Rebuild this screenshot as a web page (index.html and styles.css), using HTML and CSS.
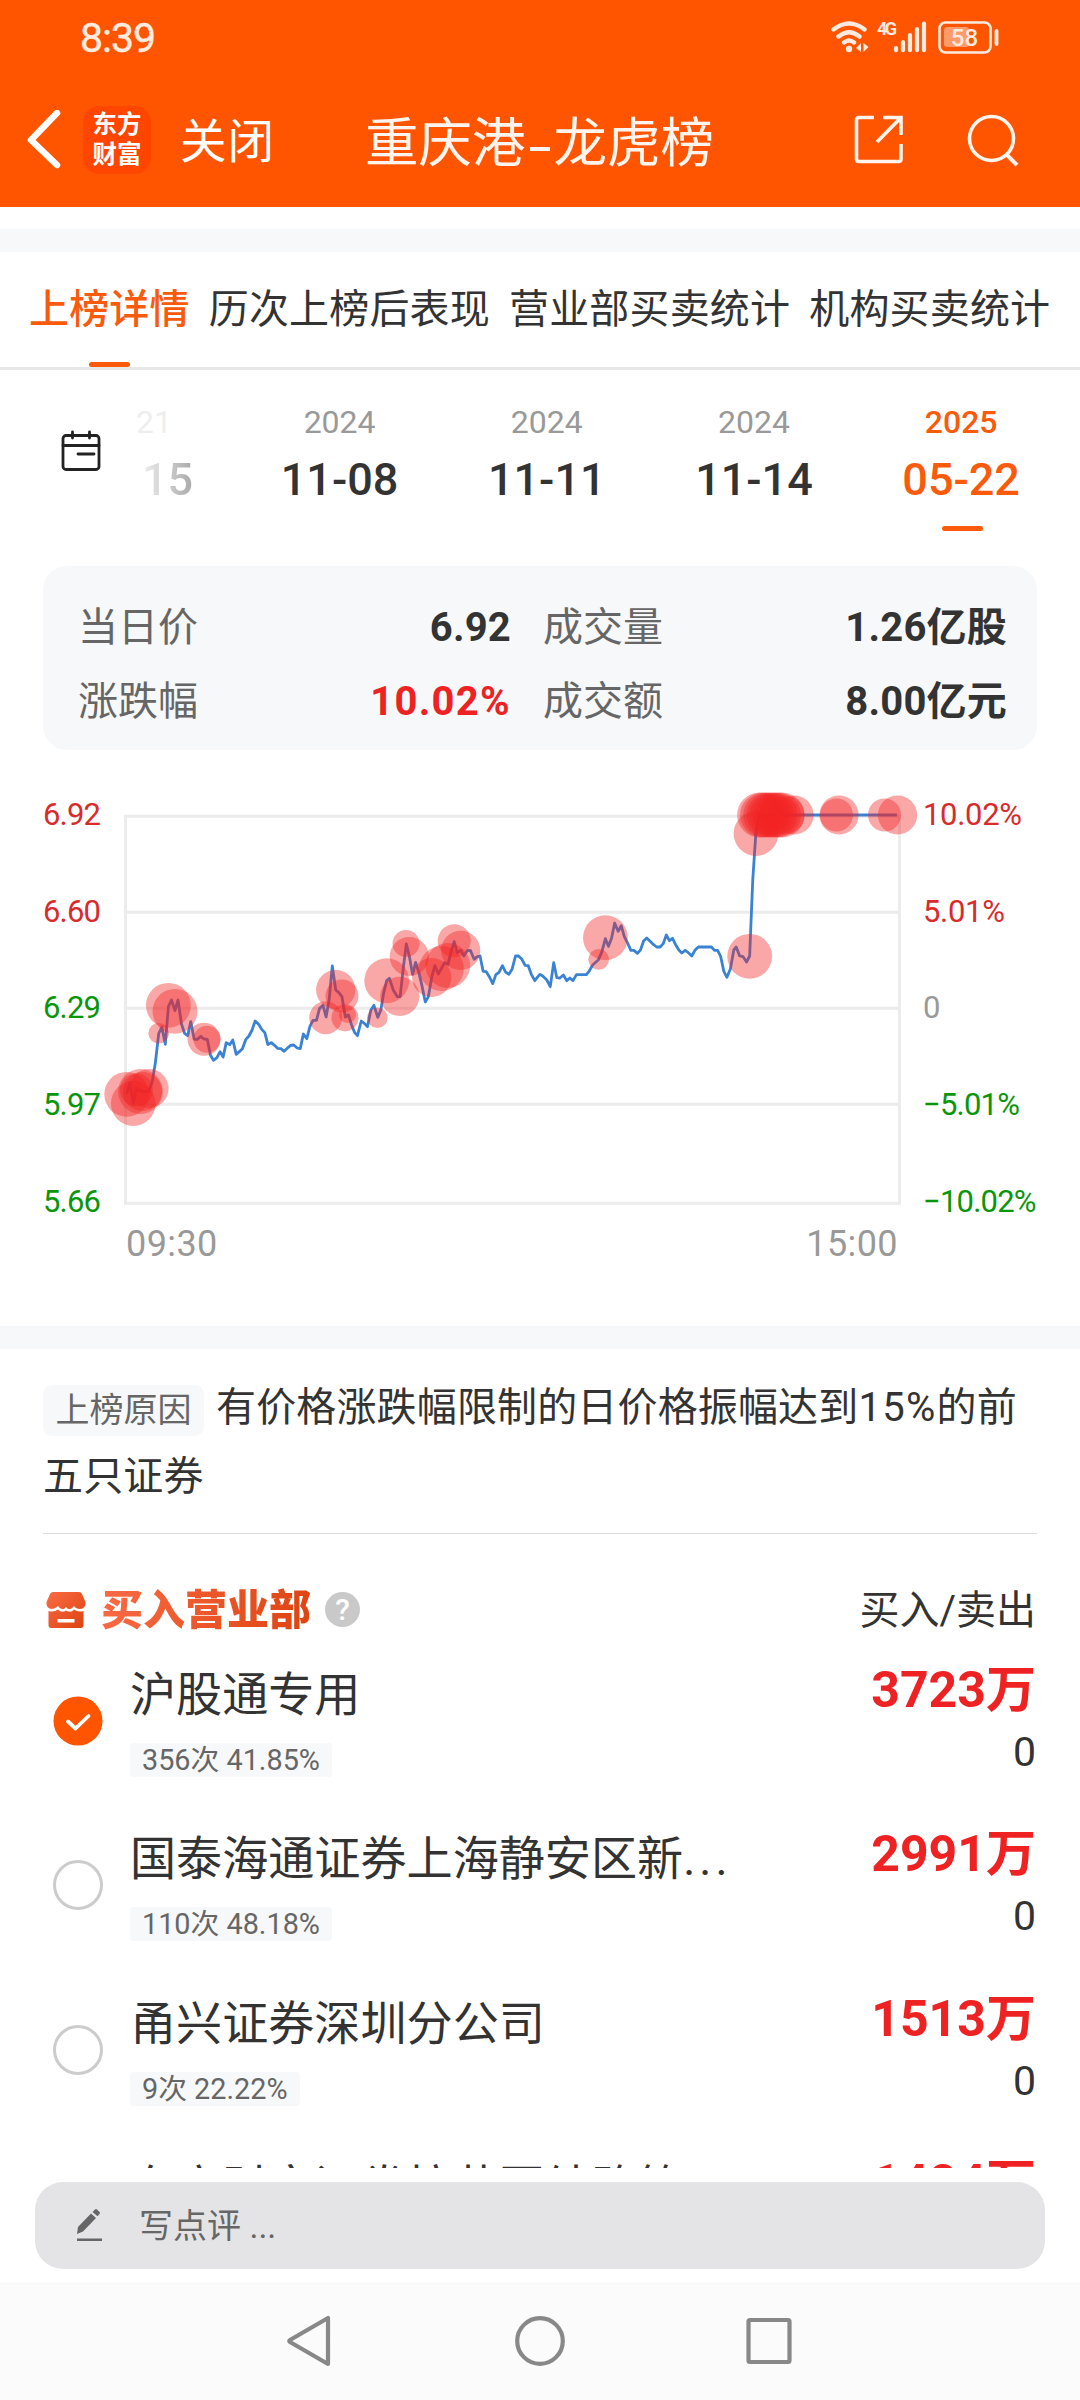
FILE: index.html
```html
<!DOCTYPE html>
<html lang="zh-CN">
<head>
<meta charset="utf-8">
<title>重庆港-龙虎榜</title>
<link rel="stylesheet" href="styles.css">
</head>
<body>
<header class="header">
  <div class="status">
    <span class="clock">8:39</span>
    <svg class="status-icons" width="172" height="44" viewBox="0 0 172 44" fill="none" stroke="#ffeadf" stroke-linecap="round">
      <g stroke-width="4.4">
        <path d="M3.500 13.500Q19 1.500 34.500 13.500M8.500 20.500Q19 12 29.500 20.500M14 26.500Q19 22.500 24 26.500"/>
      </g>
      <circle cx="19" cy="33" r="3.200" fill="#ffeadf" stroke="none"/>
      <path d="M31 27v9l-5-4zM33.500 27l5 4-5 5z" fill="#ffeadf" stroke="none"/>
      <text class="net" x="47" y="19">4G</text>
      <path stroke-width="4.200" d="M66 32v2.200M73 26v8.200M80 19v15.200M87 13v21.200M94 7.500v26.700"/>
      <rect x="109.500" y="6.500" width="51" height="30" rx="6" stroke-width="2.600"/>
      <rect x="114" y="11" width="25" height="20" rx="3" fill="#ff9a6b" stroke="none"/>
      <text class="batt" x="134.500" y="30" text-anchor="middle">58</text>
      <path stroke-width="3.800" d="M166.500 15v13"/>
    </svg>
  </div>
  <div class="nav">
    <svg class="back" width="36" height="60" viewBox="0 0 36 60" fill="none" stroke="#fff" stroke-width="6.500" stroke-linecap="round" stroke-linejoin="round"><path d="M31 6L5 33l26 25" transform="translate(1 -3)"/></svg>
    <div class="logo"><span>东方</span><span>财富</span></div>
    <span class="close">关闭</span>
    <h1 class="title">重庆港<i class="dash"></i>龙虎榜</h1>
    <svg class="share" width="50" height="50" viewBox="0 0 50 50" fill="none" stroke="#fff4ee" stroke-width="3.600"><path d="M20 2.500H5Q2.500 2.500 2.500 5V44Q2.500 46.500 5 46.500H44.500Q47 46.500 47 44V29M29 2.500H47V20M46 3.500L23 27"/></svg>
    <svg class="search" width="52" height="54" viewBox="0 0 52 54" fill="none" stroke="#fff4ee" stroke-width="3.600"><circle cx="24.500" cy="25.500" r="22"/><path d="M38.500 40.500L50 52" stroke-width="4"/></svg>
  </div>
</header>
<div class="band band-top"></div>
<nav class="tabs">
  <span class="tab active">上榜详情</span><span class="tab">历次上榜后表现</span><span class="tab">营业部买卖统计</span><span class="tab">机构买卖统计</span>
</nav>
<section class="dates">
  <svg class="calendar" width="42" height="44" viewBox="0 0 42 44" fill="none" stroke="#222" stroke-width="2.800" stroke-linecap="round"><rect x="3" y="6.500" width="36" height="34" rx="3"/><path d="M3 16.500H39M12.500 3v6M29.500 3v6M18 25H34"/></svg>
  <div class="date past"><span class="year">21</span><span class="day">15</span></div>
  <div class="date"><span class="year">2024</span><span class="day">11-08</span></div>
  <div class="date"><span class="year">2024</span><span class="day">11-11</span></div>
  <div class="date"><span class="year">2024</span><span class="day">11-14</span></div>
  <div class="date current"><span class="year">2025</span><span class="day">05-22</span></div>
</section>
<section class="stats">
  <span class="label">当日价</span><b class="value">6.92</b><span class="label second">成交量</span><b class="value">1.26亿股</b>
  <span class="label">涨跌幅</span><b class="value up">10.02%</b><span class="label second">成交额</span><b class="value">8.00亿元</b>
</section>
<svg class="chart" width="1080" height="576" viewBox="0 750 1080 576">
  <path class="grid" d="M125.500 815V1203.300H899.500V815M125.500 816.300H899.500M125.500 912.300H899.500M125.500 1008.300H899.500M125.500 1104.300H899.500"/>
  <g class="axis">
    <g class="pos"><text x="43" y="825">6.92</text><text x="43" y="922">6.60</text><text class="pct" x="923" y="825">10.02%</text><text class="pct" x="923" y="922">5.01%</text></g>
    <g class="neg"><text x="43" y="1018">6.29</text><text x="43" y="1115">5.97</text><text x="43" y="1212">5.66</text><text class="pct minus" x="923" y="1115">−5.01%</text><text class="pct minus" x="923" y="1212">−10.02%</text></g>
    <text class="mid" x="923" y="1018">0</text>
    <text class="time" x="126" y="1256">09:30</text><text class="time" x="898" y="1256" text-anchor="end">15:00</text>
  </g>
  <g transform="translate(0 770) scale(.34435 .33333)">
    <polyline class="price" points="368,972 377,938 387,1000 396,955 405,962 414,965 432,965 442,935 451,880 461,790 470,772 480,823 489,710 498,690 508,722 517,690 527,762 536,790 545,797 554,755 564,808 573,808 583,799 592,807 602,808 611,855 620,871 630,863 639,845 648,861 657,818 667,824 676,810 686,853 695,845 704,836 714,808 723,798 732,780 741,753 751,763 760,778 769,788 778,824 788,818 797,826 806,835 816,836 825,844 835,834 844,826 853,825 863,834 872,836 881,792 891,806 900,769 909,751 919,751 928,715 938,706 947,741 956,688 965,588 975,660 984,668 993,680 1003,741 1012,735 1021,765 1030,788 1038,797 1049,753 1058,760 1067,770 1077,720 1086,706 1097,742 1106,720 1114,670 1123,632 1131,625 1142,660 1154,680 1162,680 1171,595 1180,522 1189,560 1198,613 1207,577 1217,610 1226,650 1235,696 1244,680 1254,620 1263,587 1273,612 1282,595 1291,578 1301,583 1310,545 1319,515 1328,548 1338,541 1347,558 1357,542 1366,541 1377,568 1386,560 1394,558 1403,604 1412,605 1422,622 1431,641 1440,614 1449,607 1459,587 1468,606 1478,613 1487,598 1497,558 1506,558 1515,567 1525,586 1534,587 1543,613 1553,632 1562,620 1568,613 1576,618 1588,630 1598,650 1608,578 1617,623 1626,624 1636,615 1646,632 1655,624 1664,632 1674,614 1703,614 1712,602 1721,585 1738,569 1748,545 1758,506 1767,529 1776,505 1785,459 1795,484 1804,467 1813,500 1823,520 1832,541 1841,541 1851,550 1860,540 1869,513 1878,504 1888,514 1898,524 1907,531 1917,531 1926,521 1935,495 1944,512 1953,505 1962,524 1972,541 1980,549 1990,541 2000,549 2009,558 2018,541 2028,531 2066,531 2075,541 2084,541 2093,560 2102,604 2111,622 2121,597 2131,540 2138,531 2148,558 2158,560 2168,576 2177,558 2186,330 2195,190 2204,135 2605,135"/>
  </g>
  <g class="trades">
    <circle cx="126.700" cy="1094.300" r="22.400"/><circle cx="133.300" cy="1103.500" r="22.400"/><circle cx="140.500" cy="1091.500" r="22.400"/><circle cx="136.500" cy="1090" r="16.500"/><circle cx="142.500" cy="1091.500" r="19.600"/><circle cx="149" cy="1088.500" r="19.600"/>
    <circle cx="168.400" cy="1005.300" r="22.400"/><circle cx="175" cy="1011.300" r="22.400"/><circle cx="158.700" cy="1033.300" r="10.300"/><circle cx="204" cy="1039.300" r="16.500"/><circle cx="207" cy="1039.300" r="13.500"/>
    <circle cx="325.700" cy="1017.700" r="16.500"/><circle cx="335.700" cy="989.700" r="19.600"/><circle cx="342" cy="996" r="16.500"/><circle cx="345" cy="1017.700" r="13.500"/><circle cx="347.500" cy="1014.500" r="8.500"/><circle cx="377.400" cy="1017.700" r="10.300"/>
    <circle cx="386.700" cy="980.700" r="22.400"/><circle cx="399.800" cy="996.300" r="19.600"/><circle cx="406" cy="943.500" r="13.500"/><circle cx="409.300" cy="956.500" r="19.600"/><circle cx="431.700" cy="977.500" r="19.600"/><circle cx="441.500" cy="968.500" r="22.400"/><circle cx="447.800" cy="965.500" r="22.400"/><circle cx="454.200" cy="940.700" r="16.500"/><circle cx="460.700" cy="950.300" r="19.600"/>
    <circle cx="598.700" cy="959.300" r="10.400"/><circle cx="605.400" cy="937.700" r="22.400"/><circle cx="749.700" cy="956.300" r="22.400"/><circle cx="756" cy="833.500" r="22.400"/>
    <circle cx="759.500" cy="815" r="22.400"/><circle cx="762.500" cy="815" r="22.400"/><circle cx="765.700" cy="815" r="22.400"/><circle cx="768.900" cy="815" r="22.400"/><circle cx="772" cy="815" r="22.400"/><circle cx="775.300" cy="815" r="22.400"/><circle cx="778.500" cy="815" r="22.400"/><circle cx="782" cy="815" r="22.400"/><circle cx="785" cy="815" r="19.600"/><circle cx="794" cy="815" r="19.600"/>
    <circle cx="836.500" cy="815" r="16.500"/><circle cx="839" cy="815" r="19.600"/><circle cx="884.500" cy="815" r="16.500"/><circle cx="897.500" cy="815" r="19.600"/>
  </g>
</svg>
<div class="band"></div>
<section class="reason"><span class="reason-tag">上榜原因</span>有价格涨跌幅限制的日价格振幅达到<span class="num">15%</span>的前五只证券</section>
<section class="board">
  <div class="board-head">
    <svg width="40" height="36" viewBox="0 0 40 36"><defs><linearGradient id="shop" x1="0" y1="0" x2="1" y2="1"><stop offset="0" stop-color="#fa6b45"/><stop offset="1" stop-color="#dd4310"/></linearGradient></defs><path fill="url(#shop)" d="M7 0H33Q35 0 36 2L39.500 10Q40 17 34 17Q30 17 28 14Q24 20 20 15Q16 20 12 14Q9 17 6 17Q0 17 .500 10L4 2Q5 0 7 0ZM2.500 19Q8 20.500 12 17.500Q16 21.500 20 18.500Q25 21.500 28 17.500Q32 20.500 37.500 19V33Q37.500 36 34.500 36H5.500Q2.500 36 2.500 33Z"/><rect x="11.500" y="27" width="17" height="3.500" fill="#fff"/></svg>
    <h2>买入营业部</h2>
    <span class="help">?</span>
    <span class="cols">买入/卖出</span>
  </div>
  <div class="row"><svg class="radio" width="50" height="50" viewBox="0 0 50 50"><circle cx="25" cy="25" r="24.500" fill="#ff5500"/><path d="M15 25.500l7.500 7L35.500 20" fill="none" stroke="#fff" stroke-width="3.800" stroke-linecap="round" stroke-linejoin="round"/></svg><div class="info"><span class="name">沪股通专用</span><span class="record">356次 41.85%</span></div><div class="sums"><b>3723万</b><span>0</span></div></div>
  <div class="row"><i class="radio off"></i><div class="info"><span class="name">国泰海通证券上海静安区新<span class="more">...</span></span><span class="record">110次 48.18%</span></div><div class="sums"><b>2991万</b><span>0</span></div></div>
  <div class="row"><i class="radio off"></i><div class="info"><span class="name">甬兴证券深圳分公司</span><span class="record">9次 22.22%</span></div><div class="sums"><b>1513万</b><span>0</span></div></div>
  <div class="row"><div class="info"><span class="name">东方财富证券拉萨团结路第</span></div><div class="sums"><b>1484万</b></div></div>
</section>
<footer class="comment">
  <div class="comment-box">
    <svg width="30" height="34" viewBox="0 0 30 34" fill="#666"><path d="M2 25l1-7L16 4.500l5 4.500L8 22.500zM17.500 3L20 .500q1-.8 2 0L24.500 3q.8 1 0 2L22.500 7.300zM2 29.500H27v2.600H2z"/></svg>
    <span>写点评 ...</span>
  </div>
</footer>
<div class="sysbar">
  <svg width="1080" height="118" viewBox="0 0 1080 118" fill="none" stroke="#888" stroke-width="4.200" stroke-linejoin="round"><path d="M328 36V82L290 60Q288.500 59 290 58Z"/><circle cx="540" cy="59" r="22.800"/><rect x="748.500" y="38" width="41" height="42" rx="1.500"/></svg>
</div>
</body>
</html>
```
FILE: styles.css
```css
* { box-sizing: border-box; }
body { margin: 0; width: 1080px; height: 2400px; overflow: hidden; display: flex; flex-direction: column; background: #fff; color: #333; font-family: Roboto, "Noto Sans CJK SC", sans-serif; }
body > * { flex: none; }
h1, h2 { margin: 0; font-weight: 400; }
svg { display: block; flex: none; }

.header { height: 207px; background: #ff5500; color: #fff4ee; }
.status { height: 76px; padding: 0 78px 0 80px; display: flex; justify-content: space-between; align-items: center; }
.clock { font-size: 41px; line-height: 76px; letter-spacing: -1px; color: #ffeadf; -webkit-text-stroke: .5px #ffeadf; }
.status-icons text { stroke: none; fill: #ffeadf; font-weight: 500; }
.status-icons .net { font: 700 18px "Roboto", sans-serif; letter-spacing: -2.500px; }
.status-icons .batt { font-size: 24px; }
.nav { height: 128px; padding: 0 60px 0 25px; display: flex; align-items: center; }
.logo { width: 68px; height: 68px; margin-left: 22px; border-radius: 16px; background: #ff4600; color: #fff; display: flex; flex-direction: column; align-items: center; justify-content: center; font-weight: 700; font-size: 24.500px; line-height: 30px; }
.close { margin: 3px 0 0 29px; width: 99px; font-size: 46.500px; line-height: 70px; white-space: nowrap; color: #fff; letter-spacing: 1px; }
.title { margin: 7px 0 0 86px; width: 350px; font-size: 53.500px; line-height: 76px; white-space: nowrap; display: flex; align-items: center; }
.dash { width: 20px; height: 4px; margin: 11px 4px 0 4px; background: #fff4ee; }
.share { margin-left: 139px; margin-right: 63px; }

.band { height: 23px; background: #f7f8fa; }
.band-top { margin-top: 22px; }

.tabs { height: 118px; border-bottom: 3px solid #e8e8e8; padding-left: 29px; display: flex; gap: 19.200px; font-size: 40px; line-height: 116px; white-space: nowrap; }
.tab { height: 115px; letter-spacing: .15px; }
.active, .current { position: relative; color: #f95a0b; font-weight: 500; }
.active::after, .current::after { content: ""; position: absolute; left: 60px; bottom: 0; width: 41px; height: 5px; border-radius: 3px; background: #f95a0b; }

.dates { height: 196px; padding-left: 60px; display: flex; }
.calendar { margin-top: 59px; }
.date { width: 207.200px; padding-top: 33px; display: flex; flex-direction: column; align-items: center; }
.year { font-size: 32px; line-height: 38px; color: #999; }
.day { margin-top: 11px; font-size: 45px; line-height: 56px; font-weight: 500; }
.past { width: 98px; margin-left: 34px; margin-right: 2px; align-items: flex-start; }
.past .year { color: #eee; }
.past .day { margin-left: 6px; background: linear-gradient(90deg, #eee, #aaa); background-clip: text; -webkit-background-clip: text; color: transparent; }
.current .year { color: #f95a0b; }
.current::after { left: 84px; bottom: 35px; }

.stats { height: 184px; margin: 0 43px; padding: 25px 30px 0 35px; border-radius: 24px; background: #f7f8fa; display: grid; grid-template-columns: 150px 283px 213px 1fr; grid-auto-rows: 74px; align-items: center; font-size: 40px; line-height: 74px; white-space: nowrap; }
.label { color: #666; }
.second { padding-left: 32px; }
.value { text-align: right; font-weight: 700; letter-spacing: .2px; }
.up { color: #ee2222; letter-spacing: 1.300px; }

.grid { fill: none; stroke: #ececec; stroke-width: 3; }
.price { fill: none; stroke: #3a82d3; stroke-width: 2.800px; vector-effect: non-scaling-stroke; stroke-linejoin: round; }
.trades { fill: #f22222; fill-opacity: .4; }
.axis { font-size: 31px; letter-spacing: -.8px; }
.pct { font-size: 31px; letter-spacing: -.3px; }
.minus { letter-spacing: -.8px; }
.pos { fill: #d92b2b; }
.neg { fill: #0a960a; }
.mid, .time { fill: #999; }
.time { font-size: 36px; letter-spacing: .4px; }

.reason { height: 185px; margin: 0 43px; padding-top: 24px; border-bottom: 1px solid #ddd; font-size: 40px; line-height: 69px; letter-spacing: .15px; }
.reason-tag { display: inline-block; width: 161px; height: 51px; margin-right: 12px; vertical-align: middle; border-radius: 9px; background: #f7f8fa; color: #666; font-size: 34px; line-height: 51px; text-align: center; letter-spacing: 0; }
.num { letter-spacing: 1.300px; }

.board { height: 634px; overflow: hidden; padding: 0 43px; }
.board-head { height: 120px; padding: 31px 0 0 3px; display: flex; align-items: flex-start; }
.board-head svg { margin-top: 27px; }
.board h2 { margin: 8px 0 0 15px; font-size: 42px; line-height: 76px; font-weight: 900; background: linear-gradient(100deg, #fa6b45, #dd4310); background-clip: text; -webkit-background-clip: text; color: transparent; }
.help { width: 35px; height: 35px; margin: 27px 0 0 14px; border-radius: 50%; background: #c9c9c9; color: #fff; font-size: 30px; line-height: 36px; font-weight: 500; text-align: center; }
.cols { margin: 11px 1px 0 auto; font-size: 40px; line-height: 70px; }
.row { height: 164.300px; display: flex; }
.radio { width: 50px; height: 50px; margin: 42px 0 0 10px; }
.off { border: 3.500px solid #ccc; border-radius: 50%; }
.info { margin-left: 27px; display: flex; flex-direction: column; align-items: flex-start; }
.info:first-child { margin-left: 87px; }
.name { height: 89px; padding-top: 8px; font-size: 46.100px; line-height: 66px; white-space: nowrap; }
.more { letter-spacing: 4px; }
.record { height: 34px; padding: 0 12px; border-radius: 4px; background: #f7f8fa; color: #666; font-size: 28.800px; line-height: 34px; white-space: nowrap; }
.sums { margin: 0 1px 0 auto; display: flex; flex-direction: column; align-items: flex-end; }
.sums b { margin-top: 3px; font-size: 50px; line-height: 66px; font-weight: 700; color: #ee2222; }
.sums span { margin-top: 1px; font-size: 41px; line-height: 56px; }

.comment { height: 114px; padding: 14px 35px 0; }
.comment-box { height: 87px; padding-left: 40px; border-radius: 28px; background: #e4e4e6; display: flex; align-items: center; color: #666; font-size: 34px; }
.comment-box span { margin-left: 34px; line-height: 60px; }
.sysbar { height: 118px; background: #fbfbfb; }
```
